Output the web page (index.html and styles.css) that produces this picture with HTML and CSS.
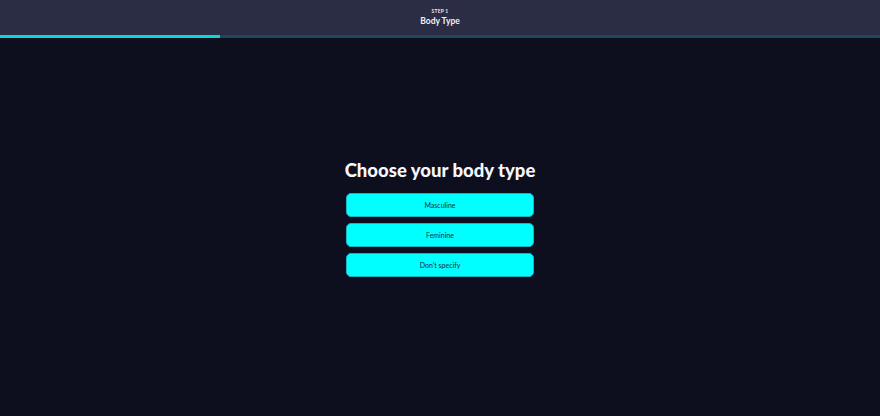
FILE: index.html
```html
<!DOCTYPE html>
<html lang="en">
<head>
<meta charset="utf-8">
<title>Body Type</title>
<link rel="stylesheet" href="styles.css">
</head>
<body>
<header class="topbar">
  <div class="step">STEP 1</div>
  <div class="step-title">Body Type</div>
</header>
<div class="progress"><div class="progress-fill" style="width:25%"></div></div>
<main class="content">
  <h1 class="heading">Choose your body type</h1>
  <div class="options">
    <button class="option">Masculine</button>
    <button class="option">Feminine</button>
    <button class="option">Don't specify</button>
  </div>
</main>
</body>
</html>
```
FILE: styles.css
```css
* { box-sizing: border-box; }
html, body { margin: 0; height: 100%; }
body {
  background: #0d0f1e;
  font-family: "Lato", "Open Sans", sans-serif;
  color: #fff;
  display: flex;
  flex-direction: column;
}
.topbar {
  height: 35px;
  background: #2b2d44;
  display: flex;
  flex-direction: column;
  align-items: center;
  padding-top: 8px;
}
.step {
  font-size: 5px;
  font-weight: 700;
  letter-spacing: 0.2px;
  color: #e6e8f5;
  line-height: 6px;
}
.step-title {
  font-size: 8.5px;
  font-weight: 700;
  color: #eef0fa;
  line-height: 11px;
  margin-top: 2px;
}
.progress {
  height: 3px;
  background: #1e4a58;
}
.progress-fill {
  height: 100%;
  background: #0ad8d8;
}
.content {
  flex: 1;
  display: flex;
  flex-direction: column;
  align-items: center;
  justify-content: center;
  padding-bottom: 20px;
}
.heading {
  margin: 0 0 11px;
  font-size: 18.5px;
  font-weight: 900;
  color: #f7f7fb;
  line-height: 24px;
}
.options {
  display: flex;
  flex-direction: column;
  gap: 6px;
  width: 188px;
}
.option {
  height: 24px;
  background: #00ffff;
  border: 1px solid #17b5c4;
  border-radius: 5px;
  font-family: inherit;
  font-size: 7px;
  color: #1b2a3a;
  padding: 0;
}
```
